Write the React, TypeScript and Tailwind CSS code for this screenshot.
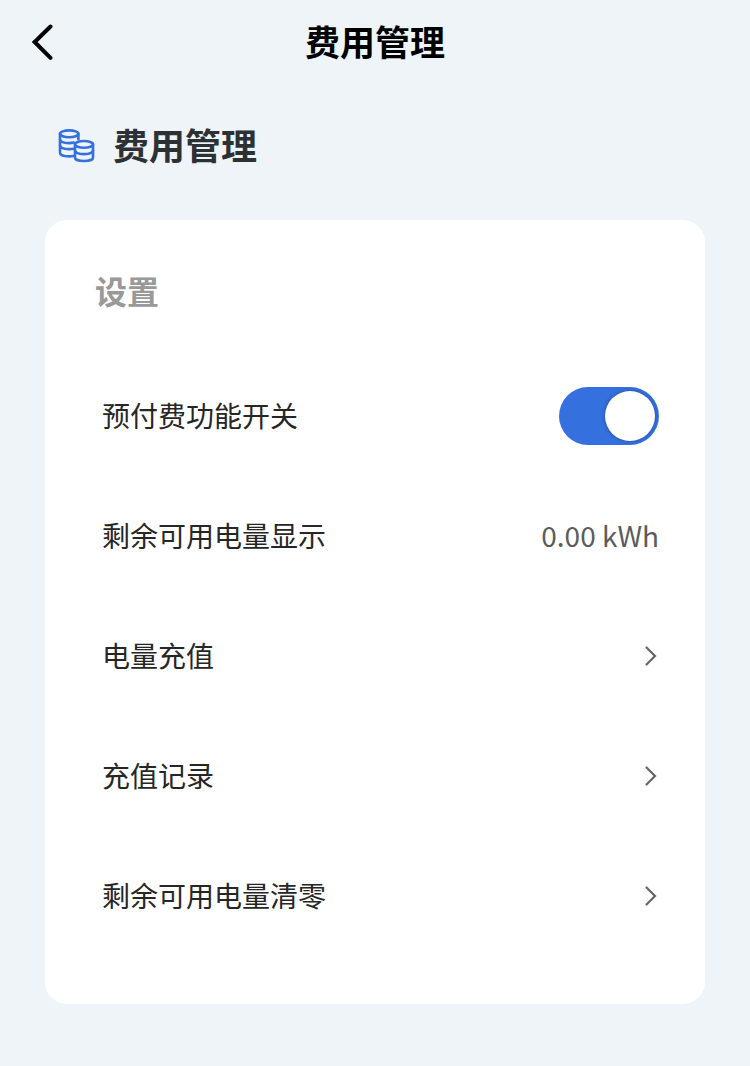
import { useState, type ReactNode } from "react";

const actions = ["电量充值", "充值记录", "剩余可用电量清零"];

function BackIcon() {
  return (
    <svg
      width="24"
      height="40"
      viewBox="0 0 24 40"
      fill="none"
      stroke="currentColor"
      strokeWidth="4"
      strokeLinecap="round"
      aria-hidden="true"
    >
      <path d="M18.500 4.500 2.700 20l15.800 15.800" />
    </svg>
  );
}

function ChevronIcon() {
  return (
    <svg
      width="16"
      height="24"
      viewBox="0 0 16 24"
      fill="none"
      stroke="currentColor"
      strokeWidth="2.2"
      strokeLinecap="round"
      aria-hidden="true"
    >
      <path d="M3.500 3.500 12 12l-8.500 8.500" />
    </svg>
  );
}

function CoinsIcon() {
  return (
    <svg
      width="38"
      height="36"
      viewBox="0 0 38 36"
      fill="none"
      stroke="currentColor"
      strokeWidth="2.6"
      strokeLinecap="round"
      aria-hidden="true"
    >
      <ellipse cx="12.2" cy="5.8" rx="9.2" ry="3.4" />
      <path d="M3 5.800v19c0 2 3.800 3.600 9.200 3.600 1.400 0 2.800-.1 4-.4" />
      <path d="M3 11.600c0 2 3.800 3.500 9.200 3.500 2 0 3.400-.2 4.600-.5" />
      <path d="M3 17.600c0 2 3.800 3.500 9.200 3.500 1.400 0 2.800-.1 4-.4" />
      <path d="M21.400 5.800v5.400" />
      <ellipse cx="27" cy="16.400" rx="9" ry="3.400" />
      <path d="M18 16.400v13c0 2 3.700 3.600 9 3.600s9-1.600 9-3.600v-13" />
      <path d="M18 22.600c0 2 3.700 3.500 9 3.500s9-1.500 9-3.500" />
    </svg>
  );
}

function Row({ label, children }: { label: ReactNode; children: ReactNode }) {
  return (
    <div className="flex h-30 items-center justify-between">
      {label}
      {children}
    </div>
  );
}

function App() {
  const [prepaid, setPrepaid] = useState(true);

  return (
    <div className="min-h-screen bg-[#eff4f8] pb-15 font-['Noto_Sans_CJK_SC',sans-serif] text-[#262626]">
      <header className="grid h-21 grid-cols-[1fr_auto_1fr] items-center px-8">
        <button type="button" aria-label="返回" className="w-6 text-black">
          <BackIcon />
        </button>
        <h1 className="pb-0.5 text-[35px] font-bold text-black">费用管理</h1>
      </header>

      <main className="px-[45px]">
        <div className="flex h-[136px] items-center gap-4.5 px-3 pb-3">
          <span className="text-[#3570df]">
            <CoinsIcon />
          </span>
          <h2 className="pb-1 text-4xl font-bold text-[#2c3136]">费用管理</h2>
        </div>

        <section className="rounded-[22px] bg-white pb-12">
          <h3 className="flex h-34 items-center px-[50px] pt-1 text-[32px] font-bold text-[#999]">
            设置
          </h3>
          <div className="pr-[46px] pl-[57px] text-[28px]">
            <Row
              label={
                <label htmlFor="prepaid" className="pb-0.5">
                  预付费功能开关
                </label>
              }
            >
              <input
                id="prepaid"
                type="checkbox"
                role="switch"
                checked={prepaid}
                onChange={(e) => setPrepaid(e.target.checked)}
                className="flex h-[58px] w-[100px] appearance-none items-center rounded-full bg-[#c9ced6] px-1 before:size-[50px] before:rounded-full before:bg-white before:shadow-[0_0_4px_rgba(0,0,0,0.3)] checked:justify-end checked:bg-[#3570df]"
              />
            </Row>
            <Row label={<span className="pb-0.5">剩余可用电量显示</span>}>
              <span className="pb-0.5 text-[#5c5c5c]">0.00 kWh</span>
            </Row>
            {actions.map((action) => (
              <button
                key={action}
                type="button"
                className="flex h-30 w-full items-center justify-between text-left"
              >
                <span className="pb-0.5">{action}</span>
                <span className="text-[#666]">
                  <ChevronIcon />
                </span>
              </button>
            ))}
          </div>
        </section>
      </main>
    </div>
  );
}

export default App;
